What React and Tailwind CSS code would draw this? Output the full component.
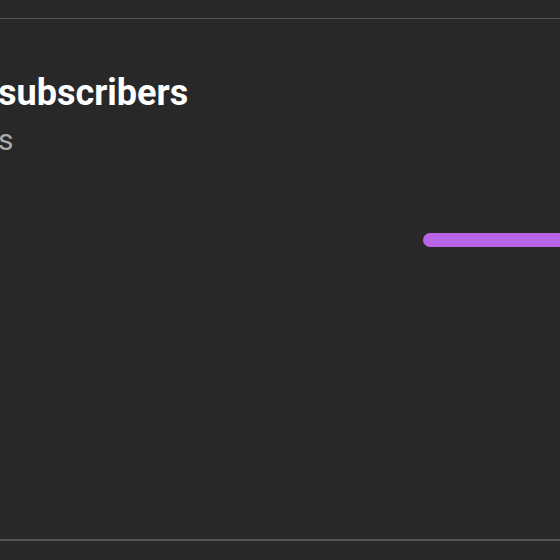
export default function App() {
  return (
    <div className="w-[560px] h-[560px] bg-[#282828] overflow-hidden flex flex-col" style={{ fontFamily: 'Roboto, "Liberation Sans", sans-serif' }}>
      <div className="h-[18px]" />
      <div className="h-px bg-[#555555]" />
      <div className="flex-1 flex flex-col">
        <div className="pt-[52px] -ml-[2px] text-[36px] leading-[44px] font-bold text-white whitespace-nowrap">subscribers</div>
        <div className="mt-[9px] -ml-[2px] text-[30px] leading-[32px] text-[#aaaaaa] whitespace-nowrap">s</div>
        <div className="mt-[77px] ml-[423px] h-[14px] rounded-l-full bg-[#b964e8]" />
      </div>
      <div className="h-[2px] bg-[#555555]" />
      <div className="h-[19px]" />
    </div>
  );
}
